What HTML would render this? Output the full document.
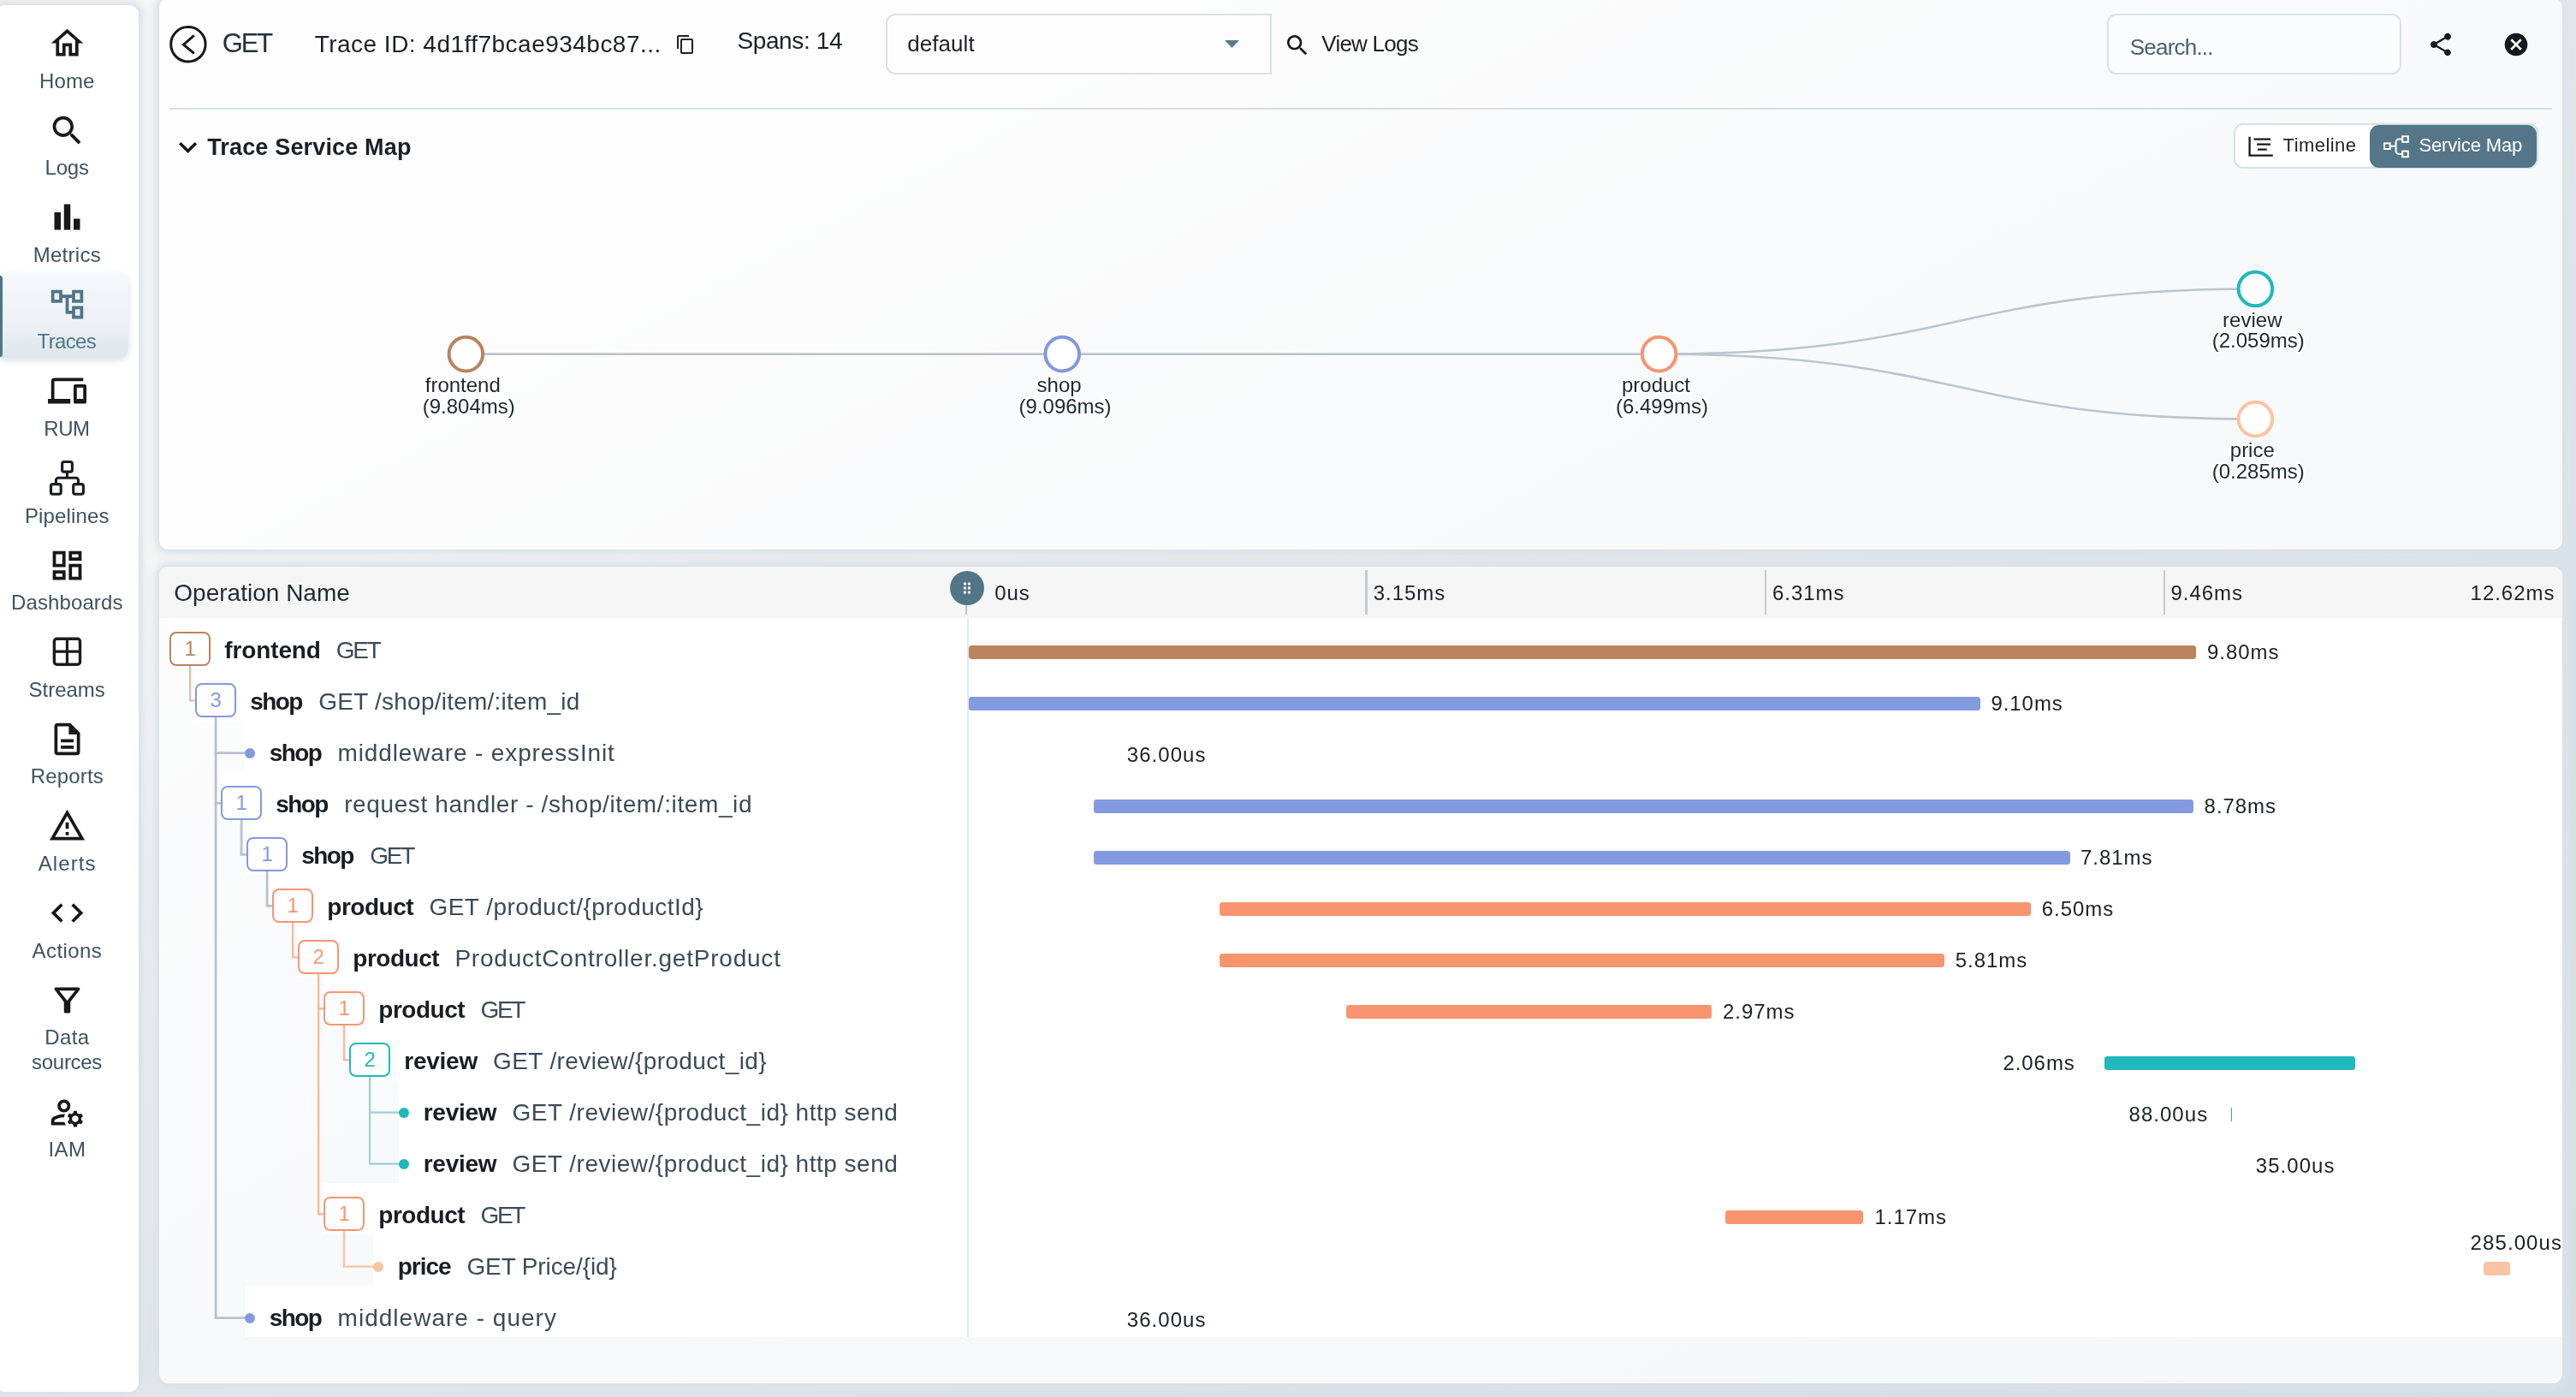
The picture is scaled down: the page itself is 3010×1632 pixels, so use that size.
<!DOCTYPE html>
<html lang="en"><head><meta charset="utf-8"><title>Trace Details</title>
<style>
html,body{margin:0;padding:0}
body{width:3010px;height:1632px;overflow:hidden;position:relative;font-family:"Liberation Sans",Arial,sans-serif;background:linear-gradient(to bottom right,#f5f5f5 0%,#f5f5f5 22%,#e8ecef 37%,#e0e6ea 52%,#d9e2e8 69%,#d3dde4 100%);}
.b{position:absolute;box-sizing:border-box}
.t{position:absolute;white-space:nowrap;line-height:1;display:block}
svg{display:block;overflow:visible}
#w{position:absolute;left:0;top:0;width:3010px;height:1632px;will-change:transform}
</style></head><body><div id="w">
<div class="b" style="left:-5.00px;top:6.00px;width:167.30px;height:1620.20px;box-shadow:0 0 8px 5px rgb(223,229,234);mix-blend-mode:darken;border-radius:11px;"></div>
<div class="b" style="left:185.80px;top:-2.00px;width:2808.20px;height:644.00px;box-shadow:0 0 8px 5px rgb(223,229,234);mix-blend-mode:darken;border-radius:11px;"></div>
<div class="b" style="left:185.80px;top:662.00px;width:2808.20px;height:954.20px;box-shadow:0 0 8px 5px rgb(223,229,234);mix-blend-mode:darken;border-radius:11px;"></div>
<div class="b" style="left:-5.00px;top:6.00px;width:167.30px;height:1620.20px;background:#fff;border-radius:11px;box-shadow:0 0 6px rgba(190,204,214,.35);"></div>
<div class="b" style="left:185.80px;top:-2.00px;width:2808.20px;height:644.00px;background:rgba(255,255,255,.76);border-radius:11px;box-shadow:0 0 6px rgba(190,204,214,.35);"></div>
<div class="b" style="left:185.80px;top:662.00px;width:2808.20px;height:954.20px;background:rgba(255,255,255,.76);border-radius:11px;box-shadow:0 0 6px rgba(190,204,214,.35);overflow:hidden;"></div>
<div class="b" style="left:0.00px;top:319.20px;width:149.60px;height:99.20px;background:linear-gradient(180deg,#f6f8fa 0%,#eef2f5 55%,#dde6eb 100%);border-radius:0 11px 11px 0;box-shadow:0 3px 8px rgba(170,188,200,.45);"></div>
<div class="b" style="left:0.00px;top:321.50px;width:2.60px;height:95.20px;background:#4f7589;border-radius:0 3px 3px 0;"></div>
<svg class="b" style="left:55.70px;top:28.00px" width="45" height="45" viewBox="0 0 24 24" fill="#18181c" ><path d="M12 5.69l5 4.5V18h-2v-6H9v6H7v-7.81l5-4.5M12 3L2 12h3v8h6v-6h2v6h6v-8h3L12 3z"/></svg>
<span class="t" style="left:46.05px;top:83.00px;font-size:24px;color:#3d5261;letter-spacing:0.100px;">Home</span>
<svg class="b" style="left:55.70px;top:129.60px" width="45" height="45" viewBox="0 0 24 24" fill="#18181c" ><path d="M15.5 14h-.79l-.28-.27C15.41 12.59 16 11.11 16 9.5 16 5.91 13.09 3 9.5 3S3 5.91 3 9.5 5.91 16 9.5 16c1.61 0 3.09-.59 4.23-1.57l.27.28v.79l5 4.99L20.49 19l-4.99-5zm-6 0C7.01 14 5 11.99 5 9.5S7.01 5 9.5 5 14 7.01 14 9.5 11.99 14 9.5 14z"/></svg>
<span class="t" style="left:52.55px;top:184.00px;font-size:24px;color:#3d5261;letter-spacing:-0.233px;">Logs</span>
<svg class="b" style="left:55.70px;top:231.20px" width="45" height="45" viewBox="0 0 24 24" fill="#18181c" ><path d="M4 9h4v11H4zm12 4h4v7h-4zm-6-9h4v16h-4z"/></svg>
<span class="t" style="left:38.65px;top:286.00px;font-size:24px;color:#3d5261;letter-spacing:0.287px;">Metrics</span>
<svg class="b" style="left:55.70px;top:332.80px" width="45" height="45" viewBox="0 0 24 24" fill="#4f7589" ><path d="M22 11V3h-7v3H9V3H2v8h7V8h2v10h4v3h7v-8h-7v3h-2V8h2v3h7zM7 9H4V5h3v4zm10 6h3v4h-3v-4zm0-10h3v4h-3V5z"/></svg>
<span class="t" style="left:43.55px;top:387.00px;font-size:24px;color:#4f7589;letter-spacing:-0.640px;">Traces</span>
<svg class="b" style="left:55.70px;top:434.40px" width="45" height="45" viewBox="0 0 24 24" fill="#18181c" ><path d="M4 6h18V4H4c-1.1 0-2 .9-2 2v11H0v3h14v-3H4V6zm19 2h-6c-.55 0-1 .45-1 1v10c0 .55.45 1 1 1h6c.55 0 1-.45 1-1V9c0-.55-.45-1-1-1zm-1 9h-4v-7h4v7z"/></svg>
<span class="t" style="left:51.35px;top:489.00px;font-size:24px;color:#3d5261;letter-spacing:-0.462px;">RUM</span>
<svg class="b" style="left:50px;top:530px" width="56" height="56" viewBox="50 530 56 56" fill="none" stroke="#1b1c21" stroke-width="3.1" stroke-linecap="round" stroke-linejoin="round"><rect x="72.65" y="539.55" width="11.7" height="11.6" rx="2.2"/><rect x="59.5" y="565.6" width="11.7" height="11.7" rx="2.2"/><rect x="85.7" y="565.6" width="11.7" height="11.7" rx="2.2"/><path d="M78.5 552.6V558.3M65.4 564V561.3a3 3 0 0 1 3-3H88.5a3 3 0 0 1 3 3V564"/></svg>
<span class="t" style="left:28.90px;top:591.00px;font-size:24px;color:#3d5261;letter-spacing:0.153px;">Pipelines</span>
<svg class="b" style="left:55.70px;top:637.60px" width="45" height="45" viewBox="0 0 24 24" fill="#18181c" ><path d="M19 5v2h-4V5h4M9 5v6H5V5h4m10 8v6h-4v-6h4M9 17v2H5v-2h4M21 3h-8v6h8V3zM11 3H3v10h8V3zm10 8h-8v10h8V11zm-10 4H3v6h8v-6z"/></svg>
<span class="t" style="left:13.05px;top:692.00px;font-size:24px;color:#3d5261;letter-spacing:0.103px;">Dashboards</span>
<svg class="b" style="left:56px;top:739px" width="46" height="46" viewBox="56 739 46 46" fill="none" stroke="#1b1c21" stroke-width="3.4"><rect x="63.4" y="746.2" width="30.1" height="30" rx="3"/><path d="M78.45 746.2V776.2M63.4 761.2H93.5" stroke-width="3.2"/></svg>
<span class="t" style="left:33.50px;top:794.00px;font-size:24px;color:#3d5261;">Streams</span>
<svg class="b" style="left:55.70px;top:840.80px" width="45" height="45" viewBox="0 0 24 24" fill="#18181c" ><path d="M8 16h8v2H8zm0-4h8v2H8zm6-10H6c-1.1 0-2 .9-2 2v16c0 1.1.89 2 1.99 2H18c1.1 0 2-.9 2-2V8l-6-6zm4 18H6V4h7v5h5v11z"/></svg>
<span class="t" style="left:35.70px;top:895.00px;font-size:24px;color:#3d5261;letter-spacing:0.167px;">Reports</span>
<svg class="b" style="left:55.70px;top:942.40px" width="45" height="45" viewBox="0 0 24 24" fill="#18181c" ><path d="M12 5.99L19.53 19H4.47L12 5.99M12 2L1 21h22L12 2zm1 14h-2v2h2v-2zm0-6h-2v4h2v-4z"/></svg>
<span class="t" style="left:44.75px;top:997.00px;font-size:24px;color:#3d5261;letter-spacing:1.105px;">Alerts</span>
<svg class="b" style="left:55.70px;top:1044.00px" width="45" height="45" viewBox="0 0 24 24" fill="#18181c" ><path d="M9.4 16.6L4.8 12l4.6-4.6L8 6l-6 6 6 6 1.4-1.4zm5.2 0l4.6-4.6-4.6-4.6L16 6l6 6-6 6-1.4-1.4z"/></svg>
<span class="t" style="left:37.50px;top:1099.00px;font-size:24px;color:#3d5261;letter-spacing:0.442px;">Actions</span>
<svg class="b" style="left:55.70px;top:1145.60px" width="45" height="45" viewBox="0 0 24 24" fill="#18181c" ><path d="M7 6h10l-5.01 6.3L7 6zm-2.75-.39C6.27 8.2 10 13 10 13v6c0 .55.45 1 1 1h2c.55 0 1-.45 1-1v-6s3.72-4.8 5.74-7.39c.51-.66.04-1.61-.79-1.61H5.04c-.83 0-1.3.95-.79 1.61z"/></svg>
<span class="t" style="left:52.35px;top:1200.00px;font-size:24px;color:#3d5261;letter-spacing:0.317px;">Data</span>
<span class="t" style="left:37.10px;top:1229.00px;font-size:24px;color:#3d5261;letter-spacing:-0.300px;">sources</span>
<svg class="b" style="left:55.70px;top:1276.70px" width="45" height="45" viewBox="0 0 24 24" fill="#18181c" ><path d="M4 18v-.65c0-.34.16-.66.41-.81C6.1 15.53 8.03 15 10 15c.03 0 .05 0 .08.01.1-.7.3-1.37.59-1.98-.22-.02-.44-.03-.67-.03-2.42 0-4.68.67-6.61 1.82-.88.52-1.39 1.5-1.39 2.53V20h9.26c-.42-.6-.75-1.28-.97-2H4zM10 12c2.21 0 4-1.79 4-4s-1.79-4-4-4-4 1.79-4 4 1.79 4 4 4zm0-6c1.1 0 2 .9 2 2s-.9 2-2 2-2-.9-2-2 .9-2 2-2zM20.75 16c0-.22-.03-.42-.06-.63l1.14-1.01-1-1.73-1.45.49c-.32-.27-.68-.48-1.08-.63L18 11h-2l-.3 1.49c-.4.15-.76.36-1.08.63l-1.45-.49-1 1.73 1.14 1.01c-.03.21-.06.41-.06.63s.03.42.06.63l-1.14 1.01 1 1.73 1.45-.49c.32.27.68.48 1.08.63L16 21h2l.3-1.49c.4-.15.76-.36 1.08-.63l1.45.49 1-1.73-1.14-1.01c.03-.21.06-.41.06-.63zM17 18c-1.1 0-2-.9-2-2s.9-2 2-2 2 .9 2 2-.9 2-2 2z"/></svg>
<span class="t" style="left:56.55px;top:1331.00px;font-size:24px;color:#3d5261;letter-spacing:0.337px;">IAM</span>
<svg class="b" style="left:196px;top:28px" width="48" height="48" viewBox="0 0 48 48" fill="none" stroke="#16181d" stroke-width="3"><circle cx="23.9" cy="23.8" r="20.2"/><path d="M30.8 13.4 L18.5 24.1 L30.8 34.3" stroke-linejoin="miter"/></svg>
<span class="t" style="left:259.70px;top:35.00px;font-size:31px;color:#24303a;letter-spacing:-2.075px;">GET</span>
<span class="t" style="left:367.70px;top:38.00px;font-size:28px;color:#1b1f27;letter-spacing:0.478px;">Trace ID: 4d1ff7bcae934bc87...</span>
<svg class="b" style="left:788.50px;top:39.70px" width="24" height="24" viewBox="0 0 24 24" fill="#1d2128" ><path d="M16 1H4c-1.1 0-2 .9-2 2v14h2V3h12V1zm3 4H8c-1.1 0-2 .9-2 2v14c0 1.1.9 2 2 2h11c1.1 0 2-.9 2-2V7c0-1.1-.9-2-2-2zm0 16H8V7h11v14z"/></svg>
<span class="t" style="left:861.40px;top:34.00px;font-size:28px;color:#1b1f27;letter-spacing:-0.366px;">Spans: 14</span>
<div class="b" style="left:1034.60px;top:16.30px;width:451.20px;height:70.90px;background:#fdfdfe;border:2px solid #d9e3e8;border-radius:11px 0 0 11px;"></div>
<span class="t" style="left:1060.20px;top:38.00px;font-size:26px;color:#1b1f27;letter-spacing:0.062px;">default</span>
<svg class="b" style="left:1431px;top:46.6px" width="17" height="9" viewBox="0 0 17 9"><path d="M0 0H17L8.5 9z" fill="#5d7b8b"/></svg>
<svg class="b" style="left:1499.60px;top:36.80px" width="32" height="32" viewBox="0 0 24 24" fill="#16181d" ><path d="M15.5 14h-.79l-.28-.27C15.41 12.59 16 11.11 16 9.5 16 5.91 13.09 3 9.5 3S3 5.91 3 9.5 5.91 16 9.5 16c1.61 0 3.09-.59 4.23-1.57l.27.28v.79l5 4.99L20.49 19l-4.99-5zm-6 0C7.01 14 5 11.99 5 9.5S7.01 5 9.5 5 14 7.01 14 9.5 11.99 14 9.5 14z"/></svg>
<span class="t" style="left:1544.30px;top:38.00px;font-size:26px;color:#1b1f27;letter-spacing:-0.762px;">View Logs</span>
<div class="b" style="left:2462.30px;top:16.20px;width:343.40px;height:71.00px;background:#fbfcfd;border:2px solid #d9e3e8;border-radius:11px;"></div>
<span class="t" style="left:2488.80px;top:42.00px;font-size:26px;color:#4a6270;letter-spacing:-0.800px;">Search...</span>
<svg class="b" style="left:2836.40px;top:35.80px" width="32" height="32" viewBox="0 0 24 24" fill="#16181d" ><path d="M18 16.08c-.76 0-1.44.3-1.96.77L8.91 12.7c.05-.23.09-.46.09-.7s-.04-.47-.09-.7l7.05-4.11c.54.5 1.25.81 2.04.81 1.66 0 3-1.34 3-3s-1.34-3-3-3-3 1.34-3 3c0 .24.04.47.09.7L8.04 9.81C7.5 9.31 6.79 9 6 9c-1.66 0-3 1.34-3 3s1.34 3 3 3c.79 0 1.5-.31 2.04-.81l7.12 4.16c-.05.21-.08.43-.08.65 0 1.61 1.31 2.92 2.92 2.92 1.61 0 2.92-1.31 2.92-2.92s-1.31-2.92-2.92-2.92z"/></svg>
<svg class="b" style="left:2924.00px;top:36.00px" width="32" height="32" viewBox="0 0 24 24" fill="#16181d" ><path d="M12 2C6.47 2 2 6.47 2 12s4.47 10 10 10 10-4.470 10-10S17.53 2 12 2zm5 13.59L15.59 17 12 13.410 8.41 17 7 15.59 10.59 12 7 8.41 8.41 7 12 10.59 15.59 7 17 8.41 13.41 12 17 15.59z"/></svg>
<div class="b" style="left:198.20px;top:126.20px;width:2783.60px;height:2.00px;background:#d4dfe5;"></div>
<svg class="b" style="left:209.3px;top:165.9px" width="21.2" height="13.1" viewBox="6 8.59 12 7.41"><path d="M16.59 8.59L12 13.17 7.41 8.59 6 10l6 6 6-6z" fill="#16181d"/></svg>
<span class="t" style="left:242.20px;top:159.00px;font-size:27px;color:#1b1f27;letter-spacing:0.161px;font-weight:700;">Trace Service Map</span>
<div class="b" style="left:2609.60px;top:144.20px;width:356.00px;height:52.80px;background:#fff;border:2px solid #d6e0e5;border-radius:11px;"></div>
<div class="b" style="left:2768.90px;top:145.60px;width:195.50px;height:50.20px;background:#557688;border-radius:11px;"></div>
<svg class="b" style="left:2624px;top:156px" width="36" height="30" viewBox="2624 156 36 30" fill="none" stroke="#16181d" stroke-width="2.3"><path d="M2628.6 159.8V181.6H2655.8"/><path d="M2633.6 162.6H2653.1M2637.2 168.7H2653.1M2638 174.6H2648.7"/></svg>
<span class="t" style="left:2667.60px;top:159.00px;font-size:22px;color:#1b1f27;letter-spacing:0.446px;">Timeline</span>
<svg class="b" style="left:2782px;top:156px" width="36" height="30" viewBox="2782 156 36 30" fill="none" stroke="#fff" stroke-width="2"><rect x="2786.1" y="167.4" width="6.6" height="6.6"/><rect x="2807.2" y="159.3" width="6.6" height="6.6"/><rect x="2807.2" y="176.6" width="6.6" height="6.6"/><path d="M2792.7 170.7H2799.6M2807.2 162.6H2803.1a3.5 3.5 0 0 0 -3.5 3.5V176.4a3.5 3.5 0 0 0 3.5 3.5H2807.2"/></svg>
<span class="t" style="left:2826.40px;top:159.00px;font-size:22px;color:#fff;letter-spacing:-0.145px;">Service Map</span>
<svg class="b" style="left:186px;top:210px" width="2808" height="420" viewBox="186 210 2808 420"><g fill="none" stroke="#bcc4cc" stroke-width="2.6"><path d="M544.4 413.6H1938.6"/><path d="M1938.6 413.6C2287.0 413.6 2287.0 337.5 2635.4 337.5"/><path d="M1938.6 413.6C2287.0 413.6 2287.0 489.6 2635.4 489.6"/></g><circle cx="544.4" cy="413.6" r="19.8" fill="#fff" stroke="#b9845d" stroke-width="4"/><circle cx="1241.2" cy="413.6" r="19.8" fill="#fff" stroke="#8296e0" stroke-width="4"/><circle cx="1938.6" cy="413.6" r="19.8" fill="#fff" stroke="#f7946f" stroke-width="4"/><circle cx="2635.4" cy="337.5" r="19.8" fill="#fff" stroke="#1fb8bd" stroke-width="4"/><circle cx="2635.4" cy="489.6" r="19.8" fill="#fff" stroke="#f9c4a3" stroke-width="4"/><g font-family="Liberation Sans, Arial, sans-serif" font-size="24" fill="#1e2732" text-anchor="middle" stroke="#fff" stroke-width="4" stroke-linejoin="round" paint-order="stroke"><text x="540.8" y="458.4">frontend</text><text x="547.8" y="482.5">(9.804ms)</text><text x="1237.6" y="458.4">shop</text><text x="1244.6" y="482.5">(9.096ms)</text><text x="1935.0" y="458.4">product</text><text x="1942.0" y="482.5">(6.499ms)</text><text x="2631.8" y="382.3">review</text><text x="2638.8" y="406.4">(2.059ms)</text><text x="2631.8" y="534.4">price</text><text x="2638.8" y="558.5">(0.285ms)</text></g></svg>
<div class="b" style="left:185.80px;top:662.00px;width:2808.20px;height:59.80px;background:#f5f5f5;border-radius:11px 11px 0 0;"></div>
<span class="t" style="left:203.30px;top:679.00px;font-size:28px;color:#1f2a33;letter-spacing:0.010px;">Operation Name</span>
<div class="b" style="left:1595.40px;top:666.30px;width:2.60px;height:51.80px;background:#c6cacd;"></div>
<div class="b" style="left:2061.90px;top:666.30px;width:2.60px;height:51.80px;background:#c6cacd;"></div>
<div class="b" style="left:2527.70px;top:666.30px;width:2.60px;height:51.80px;background:#c6cacd;"></div>
<span class="t" style="left:1162.30px;top:681.00px;font-size:24px;color:#1b1f27;letter-spacing:0.875px;">0us</span>
<span class="t" style="left:1604.80px;top:681.00px;font-size:24px;color:#1b1f27;letter-spacing:0.950px;">3.15ms</span>
<span class="t" style="left:2071.00px;top:681.00px;font-size:24px;color:#1b1f27;letter-spacing:0.950px;">6.31ms</span>
<span class="t" style="left:2536.50px;top:681.00px;font-size:24px;color:#1b1f27;letter-spacing:0.950px;">9.46ms</span>
<span class="t" style="left:2886.60px;top:681.00px;font-size:24px;color:#1b1f27;letter-spacing:0.967px;">12.62ms</span>
<div class="b" style="left:197.00px;top:722.00px;width:2797.00px;height:60.00px;background:#fff;"></div>
<div class="b" style="left:226.90px;top:782.00px;width:2767.10px;height:60.00px;background:#fff;"></div>
<div class="b" style="left:285.80px;top:842.00px;width:2708.20px;height:60.00px;background:#fff;"></div>
<div class="b" style="left:256.90px;top:902.00px;width:2737.10px;height:60.00px;background:#fff;"></div>
<div class="b" style="left:286.90px;top:962.00px;width:2707.10px;height:60.00px;background:#fff;"></div>
<div class="b" style="left:316.90px;top:1022.00px;width:2677.10px;height:60.00px;background:#fff;"></div>
<div class="b" style="left:346.90px;top:1082.00px;width:2647.10px;height:60.00px;background:#fff;"></div>
<div class="b" style="left:376.90px;top:1142.00px;width:2617.10px;height:60.00px;background:#fff;"></div>
<div class="b" style="left:406.90px;top:1202.00px;width:2587.10px;height:60.00px;background:#fff;"></div>
<div class="b" style="left:465.80px;top:1262.00px;width:2528.20px;height:60.00px;background:#fff;"></div>
<div class="b" style="left:465.80px;top:1322.00px;width:2528.20px;height:60.00px;background:#fff;"></div>
<div class="b" style="left:376.90px;top:1382.00px;width:2617.10px;height:60.00px;background:#fff;"></div>
<div class="b" style="left:435.80px;top:1442.00px;width:2558.20px;height:60.00px;background:#fff;"></div>
<div class="b" style="left:285.80px;top:1502.00px;width:2708.20px;height:60.00px;background:#fff;"></div>
<div class="b" style="left:1130.00px;top:721.80px;width:2.00px;height:840.20px;background:#e3e9ed;"></div>
<div class="b" style="left:1128.00px;top:706.50px;width:2.10px;height:11.40px;background:#bcc4cf;"></div>
<svg class="b" style="left:186px;top:722px" width="950" height="840" viewBox="186 722 950 840" fill="none"><path d="M222.1 777.6V818.3" stroke="#dcbfa8" stroke-width="2.2"/><path d="M221.0 818.3H228.4" stroke="#dcbfa8" stroke-width="2.2"/><path d="M252.1 837.6V1539.6" stroke="#b9c2ce" stroke-width="2.8"/><path d="M250.7 879.6H292.0" stroke="#b9c2ce" stroke-width="2.8"/><path d="M250.7 938.3H258.4" stroke="#b9c2ce" stroke-width="2.8"/><path d="M250.7 1539.6H292.0" stroke="#b9c2ce" stroke-width="2.8"/><path d="M282.1 957.6V998.3" stroke="#b9c2ce" stroke-width="2.8"/><path d="M280.7 998.3H288.4" stroke="#b9c2ce" stroke-width="2.8"/><path d="M312.1 1017.6V1058.3" stroke="#b9c2ce" stroke-width="2.8"/><path d="M310.7 1058.3H318.4" stroke="#b9c2ce" stroke-width="2.8"/><path d="M342.1 1077.6V1118.3" stroke="#f8b99d" stroke-width="2.4"/><path d="M340.9 1118.3H348.4" stroke="#f8b99d" stroke-width="2.4"/><path d="M372.1 1137.6V1418.3" stroke="#f8b99d" stroke-width="2.4"/><path d="M370.9 1178.3H378.4" stroke="#f8b99d" stroke-width="2.4"/><path d="M370.9 1418.3H378.4" stroke="#f8b99d" stroke-width="2.4"/><path d="M402.1 1197.6V1238.3" stroke="#f8b99d" stroke-width="2.4"/><path d="M400.9 1238.3H408.4" stroke="#f8b99d" stroke-width="2.4"/><path d="M432.1 1257.6V1359.6" stroke="#9ad0d4" stroke-width="2.2"/><path d="M431.0 1299.6H472.0" stroke="#9ad0d4" stroke-width="2.2"/><path d="M431.0 1359.6H472.0" stroke="#9ad0d4" stroke-width="2.2"/><path d="M402.1 1437.6V1479.6" stroke="#f9c4a3" stroke-width="2.4"/><path d="M400.9 1479.6H442.0" stroke="#f9c4a3" stroke-width="2.4"/></svg>
<div class="b" style="left:198.40px;top:738.40px;width:47.30px;height:39.30px;background:#fff;border:2px solid #b9845d;border-radius:8px;"></div>
<span class="t" style="left:215.41px;top:746.00px;font-size:24px;color:#b9845d;">1</span>
<span class="t" style="left:262.30px;top:746.00px;font-size:28px;color:#191d24;letter-spacing:-0.129px;font-weight:700;">frontend</span>
<span class="t" style="left:392.70px;top:746.00px;font-size:28px;color:#3b4b57;letter-spacing:-2.250px;">GET</span>
<div class="b" style="left:228.40px;top:798.40px;width:47.30px;height:39.30px;background:#fff;border:2px solid #8399e0;border-radius:8px;"></div>
<span class="t" style="left:245.41px;top:806.00px;font-size:24px;color:#8399e0;">3</span>
<span class="t" style="left:292.30px;top:806.00px;font-size:28px;color:#191d24;letter-spacing:-1.592px;font-weight:700;">shop</span>
<span class="t" style="left:372.20px;top:806.00px;font-size:28px;color:#3b4b57;letter-spacing:0.242px;">GET /shop/item/:item_id</span>
<div class="b" style="left:286.00px;top:873.60px;width:12.00px;height:12.00px;background:#8399e0;border-radius:50%;"></div>
<span class="t" style="left:314.70px;top:866.00px;font-size:28px;color:#191d24;letter-spacing:-1.592px;font-weight:700;">shop</span>
<span class="t" style="left:394.60px;top:866.00px;font-size:28px;color:#3b4b57;letter-spacing:0.861px;">middleware - expressInit</span>
<div class="b" style="left:258.40px;top:918.40px;width:47.30px;height:39.30px;background:#fff;border:2px solid #8399e0;border-radius:8px;"></div>
<span class="t" style="left:275.41px;top:926.00px;font-size:24px;color:#8399e0;">1</span>
<span class="t" style="left:322.30px;top:926.00px;font-size:28px;color:#191d24;letter-spacing:-1.592px;font-weight:700;">shop</span>
<span class="t" style="left:402.20px;top:926.00px;font-size:28px;color:#3b4b57;letter-spacing:0.606px;">request handler - /shop/item/:item_id</span>
<div class="b" style="left:288.40px;top:978.40px;width:47.30px;height:39.30px;background:#fff;border:2px solid #8399e0;border-radius:8px;"></div>
<span class="t" style="left:305.41px;top:986.00px;font-size:24px;color:#8399e0;">1</span>
<span class="t" style="left:352.30px;top:986.00px;font-size:28px;color:#191d24;letter-spacing:-1.592px;font-weight:700;">shop</span>
<span class="t" style="left:432.20px;top:986.00px;font-size:28px;color:#3b4b57;letter-spacing:-2.250px;">GET</span>
<div class="b" style="left:318.40px;top:1038.40px;width:47.30px;height:39.30px;background:#fff;border:2px solid #f89570;border-radius:8px;"></div>
<span class="t" style="left:335.41px;top:1046.00px;font-size:24px;color:#f89570;">1</span>
<span class="t" style="left:382.30px;top:1046.00px;font-size:28px;color:#191d24;letter-spacing:-0.492px;font-weight:700;">product</span>
<span class="t" style="left:501.40px;top:1046.00px;font-size:28px;color:#3b4b57;letter-spacing:0.480px;">GET /product/{productId}</span>
<div class="b" style="left:348.40px;top:1098.40px;width:47.30px;height:39.30px;background:#fff;border:2px solid #f89570;border-radius:8px;"></div>
<span class="t" style="left:365.41px;top:1106.00px;font-size:24px;color:#f89570;">2</span>
<span class="t" style="left:412.30px;top:1106.00px;font-size:28px;color:#191d24;letter-spacing:-0.492px;font-weight:700;">product</span>
<span class="t" style="left:531.40px;top:1106.00px;font-size:28px;color:#3b4b57;letter-spacing:0.778px;">ProductController.getProduct</span>
<div class="b" style="left:378.40px;top:1158.40px;width:47.30px;height:39.30px;background:#fff;border:2px solid #f89570;border-radius:8px;"></div>
<span class="t" style="left:395.41px;top:1166.00px;font-size:24px;color:#f89570;">1</span>
<span class="t" style="left:442.30px;top:1166.00px;font-size:28px;color:#191d24;letter-spacing:-0.492px;font-weight:700;">product</span>
<span class="t" style="left:561.40px;top:1166.00px;font-size:28px;color:#3b4b57;letter-spacing:-2.250px;">GET</span>
<div class="b" style="left:408.40px;top:1218.40px;width:47.30px;height:39.30px;background:#fff;border:2px solid #1fb8bd;border-radius:8px;"></div>
<span class="t" style="left:425.41px;top:1226.00px;font-size:24px;color:#1fb8bd;">2</span>
<span class="t" style="left:472.30px;top:1226.00px;font-size:28px;color:#191d24;letter-spacing:-0.250px;font-weight:700;">review</span>
<span class="t" style="left:576.10px;top:1226.00px;font-size:28px;color:#3b4b57;letter-spacing:0.380px;">GET /review/{product_id}</span>
<div class="b" style="left:466.00px;top:1293.60px;width:12.00px;height:12.00px;background:#1fb8bd;border-radius:50%;"></div>
<span class="t" style="left:494.70px;top:1286.00px;font-size:28px;color:#191d24;letter-spacing:-0.250px;font-weight:700;">review</span>
<span class="t" style="left:598.50px;top:1286.00px;font-size:28px;color:#3b4b57;letter-spacing:0.502px;">GET /review/{product_id} http send</span>
<div class="b" style="left:466.00px;top:1353.60px;width:12.00px;height:12.00px;background:#1fb8bd;border-radius:50%;"></div>
<span class="t" style="left:494.70px;top:1346.00px;font-size:28px;color:#191d24;letter-spacing:-0.250px;font-weight:700;">review</span>
<span class="t" style="left:598.50px;top:1346.00px;font-size:28px;color:#3b4b57;letter-spacing:0.502px;">GET /review/{product_id} http send</span>
<div class="b" style="left:378.40px;top:1398.40px;width:47.30px;height:39.30px;background:#fff;border:2px solid #f89570;border-radius:8px;"></div>
<span class="t" style="left:395.41px;top:1406.00px;font-size:24px;color:#f89570;">1</span>
<span class="t" style="left:442.30px;top:1406.00px;font-size:28px;color:#191d24;letter-spacing:-0.492px;font-weight:700;">product</span>
<span class="t" style="left:561.40px;top:1406.00px;font-size:28px;color:#3b4b57;letter-spacing:-2.250px;">GET</span>
<div class="b" style="left:436.00px;top:1473.60px;width:12.00px;height:12.00px;background:#f9c4a3;border-radius:50%;"></div>
<span class="t" style="left:464.70px;top:1466.00px;font-size:28px;color:#191d24;letter-spacing:-0.994px;font-weight:700;">price</span>
<span class="t" style="left:545.40px;top:1466.00px;font-size:28px;color:#3b4b57;letter-spacing:-0.106px;">GET Price/{id}</span>
<div class="b" style="left:286.00px;top:1533.60px;width:12.00px;height:12.00px;background:#8399e0;border-radius:50%;"></div>
<span class="t" style="left:314.70px;top:1526.00px;font-size:28px;color:#191d24;letter-spacing:-1.592px;font-weight:700;">shop</span>
<span class="t" style="left:394.60px;top:1526.00px;font-size:28px;color:#3b4b57;letter-spacing:1.016px;">middleware - query</span>
<div class="b" style="left:1110.20px;top:667.20px;width:39.80px;height:39.80px;background:#527588;border-radius:50%;"></div>
<svg class="b" style="left:1120px;top:677.2px" width="20" height="20" viewBox="0 0 24 24" fill="#fff"><path d="M11 18c0 1.1-.9 2-2 2s-2-.9-2-2 .9-2 2-2 2 .9 2 2zm-2-8c-1.1 0-2 .9-2 2s.9 2 2 2 2-.9 2-2-.9-2-2-2zm0-6c-1.1 0-2 .9-2 2s.9 2 2 2 2-.9 2-2-.9-2-2-2zm6 4c1.1 0 2-.9 2-2s-.9-2-2-2-2 .9-2 2 .9 2 2 2zm0 2c-1.1 0-2 .9-2 2s.9 2 2 2 2-.9 2-2-.9-2-2-2zm0 6c-1.1 0-2 .9-2 2s.9 2 2 2 2-.9 2-2-.9-2-2-2z"/></svg>
<div class="b" style="left:1132.00px;top:754.10px;width:1433.90px;height:15.80px;background:#b9845d;border-radius:3.5px;"></div>
<span class="t" style="left:2579.00px;top:750.00px;font-size:24px;color:#1b1f27;letter-spacing:0.950px;">9.80ms</span>
<div class="b" style="left:1132.00px;top:814.10px;width:1182.00px;height:15.80px;background:#8399e0;border-radius:3.5px;"></div>
<span class="t" style="left:2326.40px;top:810.00px;font-size:24px;color:#1b1f27;letter-spacing:0.950px;">9.10ms</span>
<span class="t" style="left:1316.80px;top:870.00px;font-size:24px;color:#1b1f27;letter-spacing:1.037px;">36.00us</span>
<div class="b" style="left:1277.90px;top:934.10px;width:1284.90px;height:15.80px;background:#8399e0;border-radius:3.5px;"></div>
<span class="t" style="left:2575.60px;top:930.00px;font-size:24px;color:#1b1f27;letter-spacing:0.950px;">8.78ms</span>
<div class="b" style="left:1277.90px;top:994.10px;width:1140.90px;height:15.80px;background:#8399e0;border-radius:3.5px;"></div>
<span class="t" style="left:2431.00px;top:990.00px;font-size:24px;color:#1b1f27;letter-spacing:0.950px;">7.81ms</span>
<div class="b" style="left:1425.00px;top:1054.10px;width:948.00px;height:15.80px;background:#f89570;border-radius:3.5px;"></div>
<span class="t" style="left:2385.80px;top:1050.00px;font-size:24px;color:#1b1f27;letter-spacing:0.950px;">6.50ms</span>
<div class="b" style="left:1425.00px;top:1114.10px;width:847.00px;height:15.80px;background:#f89570;border-radius:3.5px;"></div>
<span class="t" style="left:2284.80px;top:1110.00px;font-size:24px;color:#1b1f27;letter-spacing:0.950px;">5.81ms</span>
<div class="b" style="left:1573.00px;top:1174.10px;width:427.00px;height:15.80px;background:#f89570;border-radius:3.5px;"></div>
<span class="t" style="left:2013.00px;top:1170.00px;font-size:24px;color:#1b1f27;letter-spacing:0.950px;">2.97ms</span>
<div class="b" style="left:2459.10px;top:1234.10px;width:292.70px;height:15.80px;background:#1fb8bd;border-radius:3.5px;"></div>
<span class="t" style="left:2340.40px;top:1230.00px;font-size:24px;color:#1b1f27;letter-spacing:0.950px;">2.06ms</span>
<div class="b" style="left:2606.60px;top:1294.10px;width:1.80px;height:15.80px;background:#1fb8bd;border-radius:0px;"></div>
<span class="t" style="left:2487.50px;top:1290.00px;font-size:24px;color:#1b1f27;letter-spacing:1.037px;">88.00us</span>
<span class="t" style="left:2635.80px;top:1350.00px;font-size:24px;color:#1b1f27;letter-spacing:1.037px;">35.00us</span>
<div class="b" style="left:2016.20px;top:1414.10px;width:160.80px;height:15.80px;background:#f89570;border-radius:3.5px;"></div>
<span class="t" style="left:2190.50px;top:1410.00px;font-size:24px;color:#1b1f27;letter-spacing:0.950px;">1.17ms</span>
<div class="b" style="left:2902.00px;top:1474.10px;width:30.70px;height:15.80px;background:#f9c4a3;border-radius:3.5px;"></div>
<span class="t" style="left:2886.60px;top:1440.00px;font-size:24px;color:#1b1f27;letter-spacing:1.093px;">285.00us</span>
<span class="t" style="left:1316.80px;top:1530.00px;font-size:24px;color:#1b1f27;letter-spacing:1.037px;">36.00us</span>
</div>
<script>(function(){var s=window.innerWidth/3010;if(s>0&&Math.abs(s-1)>0.01){document.documentElement.style.zoom=s;}})();</script>
</body></html>
